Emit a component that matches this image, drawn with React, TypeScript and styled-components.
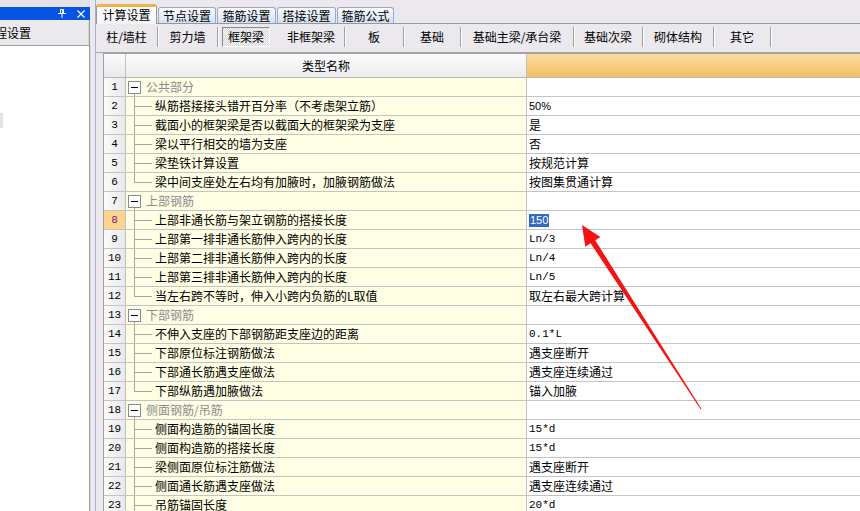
import React from 'react'
import styled, { createGlobalStyle, css } from 'styled-components'

type Line =
  | { kind: 'group'; label: string }
  | { kind: 'item'; label: string; value: string; font?: 'mono' | 'sans'; selected?: boolean }

const lines: Line[] = [
  { kind: 'group', label: '公共部分' },
  { kind: 'item', label: '纵筋搭接接头错开百分率（不考虑架立筋）', value: '50%', font: 'sans' },
  { kind: 'item', label: '截面小的框架梁是否以截面大的框架梁为支座', value: '是' },
  { kind: 'item', label: '梁以平行相交的墙为支座', value: '否' },
  { kind: 'item', label: '梁垫铁计算设置', value: '按规范计算' },
  { kind: 'item', label: '梁中间支座处左右均有加腋时，加腋钢筋做法', value: '按图集贯通计算' },
  { kind: 'group', label: '上部钢筋' },
  { kind: 'item', label: '上部非通长筋与架立钢筋的搭接长度', value: '150', font: 'sans', selected: true },
  { kind: 'item', label: '上部第一排非通长筋伸入跨内的长度', value: 'Ln/3', font: 'mono' },
  { kind: 'item', label: '上部第二排非通长筋伸入跨内的长度', value: 'Ln/4', font: 'mono' },
  { kind: 'item', label: '上部第三排非通长筋伸入跨内的长度', value: 'Ln/5', font: 'mono' },
  { kind: 'item', label: '当左右跨不等时，伸入小跨内负筋的L取值', value: '取左右最大跨计算' },
  { kind: 'group', label: '下部钢筋' },
  { kind: 'item', label: '不伸入支座的下部钢筋距支座边的距离', value: '0.1*L', font: 'mono' },
  { kind: 'item', label: '下部原位标注钢筋做法', value: '遇支座断开' },
  { kind: 'item', label: '下部通长筋遇支座做法', value: '遇支座连续通过' },
  { kind: 'item', label: '下部纵筋遇加腋做法', value: '锚入加腋' },
  { kind: 'group', label: '侧面钢筋/吊筋' },
  { kind: 'item', label: '侧面构造筋的锚固长度', value: '15*d', font: 'mono' },
  { kind: 'item', label: '侧面构造筋的搭接长度', value: '15*d', font: 'mono' },
  { kind: 'item', label: '梁侧面原位标注筋做法', value: '遇支座断开' },
  { kind: 'item', label: '侧面通长筋遇支座做法', value: '遇支座连续通过' },
  { kind: 'item', label: '吊筋锚固长度', value: '20*d', font: 'mono' },
]

const tabs = [
  { label: '计算设置', w: 61, active: true },
  { label: '节点设置', w: 58 },
  { label: '箍筋设置', w: 59 },
  { label: '搭接设置', w: 59 },
  { label: '箍筋公式', w: 57 },
]

const subTabs = [
  { label: '柱/墙柱', w: 62 },
  { label: '剪力墙', w: 60 },
  { label: '框架梁', w: 60, pressed: true },
  { label: '非框架梁', w: 67 },
  { label: '板', w: 59 },
  { label: '基础', w: 57 },
  { label: '基础主梁/承台梁', w: 113 },
  { label: '基础次梁', w: 69 },
  { label: '砌体结构', w: 71 },
  { label: '其它', w: 57 },
]

const CJK = '"Noto Sans CJK SC", "Liberation Sans", sans-serif'
const LINE = '#c4c4c4'
const TREE = '#a6a6a6'

const GlobalStyle = createGlobalStyle`
  html, body { margin: 0; padding: 0; }
  body {
    width: 860px;
    height: 511px;
    overflow: hidden;
    background: #ebe9ed;
    font-family: ${CJK};
    font-size: 12px;
    color: #000;
  }
  * { box-sizing: border-box; }
`

const Screen = styled.div`
  position: relative;
  display: flex;
  width: 860px;
  height: 511px;
  overflow: hidden;
`

const SidePanel = styled.div`
  width: 90px;
  flex: none;
  display: flex;
  flex-direction: column;
`

const TopStrip = styled.div`
  height: 7px;
  background: #e4e2e6;
`

const TitleBar = styled.div`
  height: 13px;
  background: #0554e3;
  display: flex;
  align-items: center;
  justify-content: flex-end;
  gap: 11px;
  padding-right: 5px;
`

const PanelHead = styled.div`
  height: 25px;
  display: flex;
  align-items: center;
  overflow: hidden;
  white-space: nowrap;
  border-right: 1px solid #9c9c9c;
  box-shadow: inset -1px 0 0 #d6d6d6;
  line-height: 14px;
`

const PanelTitle = styled.span`
  margin-left: -17px;
  padding-top: 1px;
`

const PanelBody = styled.div`
  flex: 1;
  background: #fff;
  border-top: 1px solid #a0a0a0;
  border-right: 1px solid #9c9c9c;
  box-shadow: 1px 0 0 #d6d6d6;
  padding-top: 67px;
`

const ListStub = styled.div`
  width: 3px;
  height: 15px;
  background: #e3e3e6;
`

const Splitter = styled.div`
  width: 6px;
  flex: none;
  border-right: 1px solid #a4b2cb;
`

const Main = styled.div`
  flex: 1;
  min-width: 0;
  display: flex;
  flex-direction: column;
`

const TabStrip = styled.div`
  height: 24px;
  flex: none;
  display: flex;
  align-items: flex-end;
  gap: 1px;
  padding-top: 4px;
  border-bottom: 1px solid #919b9c;
`

const Tab = styled.div<{ $active?: boolean; $w: number }>`
  width: ${p => p.$w}px;
  display: flex;
  align-items: center;
  justify-content: center;
  border: 1px solid #9aa9c4;
  border-bottom: none;
  border-radius: 3px 3px 0 0;
  line-height: 14px;
  ${p =>
    p.$active
      ? css`
          height: 20px;
          margin-bottom: -1px;
          background: linear-gradient(#fefefe, #f4f3f6);
          border-color: #919b9c;
          border-top: 3px solid #f3b046;
          padding-bottom: 1px;
        `
      : css`
          height: 16px;
          background: linear-gradient(#fbfcfe, #d4e0f4);
        `}
`

const SubTabBar = styled.div`
  height: 29px;
  flex: none;
  display: flex;
  align-items: flex-start;
  padding-top: 3px;
  border-bottom: 1px solid #a7a7ab;
`

const SubTab = styled.div<{ $w: number; $pressed?: boolean }>`
  width: ${p => p.$w}px;
  height: 20px;
  display: flex;
  align-items: center;
  line-height: 14px;
  ${p =>
    p.$pressed
      ? css`
          justify-content: flex-start;
          padding-left: 4px;
        `
      : css`
          justify-content: center;
          border-right: 1px solid #a0a0a0;
          box-shadow: 1px 0 0 #ffffff;
        `}
`

const PressedLabel = styled.span`
  width: 48px;
  height: 20px;
  display: flex;
  align-items: center;
  justify-content: center;
  border: 1px solid;
  border-color: #8a8a8a #ffffff #ffffff #8a8a8a;
  background: repeating-conic-gradient(#f4f4f4 0 25%, #d9d9dc 0 50%) 0 0 / 2px 2px;
`

const GridArea = styled.div`
  flex: 1;
  min-height: 0;
  padding-left: 7px;
  overflow: hidden;
`

const Grid = styled.div`
  border-left: 1px solid #a0a0a0;
  border-top: 1px solid #a0a0a0;
  background: #fff;
`

const HeaderRow = styled.div`
  display: flex;
  height: 24px;
  border-bottom: 1px solid #b8b8b8;
`

const HeadNum = styled.div`
  width: 22px;
  flex: none;
  border-right: 1px solid #c0c0c0;
  background: linear-gradient(#fbfbfb, #e9e9eb);
`

const HeadName = styled.div`
  width: 401px;
  flex: none;
  display: flex;
  align-items: center;
  justify-content: center;
  border-right: 1px solid #c0c0c0;
  background: linear-gradient(#fbfbfb, #ececee);
  line-height: 14px;
`

const HeadValue = styled.div`
  flex: 1;
  background: linear-gradient(#fadca3, #f2c064);
`

const Row = styled.div`
  display: flex;
  height: 19px;
  border-bottom: 1px solid ${LINE};
`

const NumCell = styled.div<{ $selected?: boolean }>`
  width: 22px;
  flex: none;
  display: flex;
  align-items: center;
  justify-content: center;
  border-right: 1px solid #c0c0c0;
  font-family: "Liberation Mono", monospace;
  font-size: 11px;
  ${p =>
    p.$selected
      ? css`
          background: #fdd48c;
          color: #7a1f7a;
        `
      : css`
          background: linear-gradient(90deg, #fbfbfb, #e9e9eb);
          color: #000;
        `}
`

const NameCell = styled.div`
  width: 401px;
  flex: none;
  display: flex;
  align-items: center;
  border-right: 1px solid #c0c0c0;
  background: #fefee4;
  line-height: 14px;
  white-space: nowrap;
  overflow: hidden;
`

const GroupGutter = styled.span`
  position: relative;
  align-self: stretch;
  width: 20px;
  flex: none;
  display: flex;
  align-items: center;
  padding-left: 2px;

  &::after {
    content: '';
    position: absolute;
    left: 8px;
    top: calc(50% + 7px);
    bottom: -1px;
    border-left: 1px solid ${TREE};
  }
`

const ToggleBox = styled.span`
  position: relative;
  width: 13px;
  height: 13px;
  border: 1px solid #8c8c8c;
  background: #fff;

  &::before {
    content: '';
    position: absolute;
    left: 2px;
    right: 2px;
    top: 5px;
    border-top: 1px solid #000;
  }
`

const GroupLabel = styled.span`
  color: #8c8c8c;
`

const Connector = styled.span<{ $last?: boolean }>`
  position: relative;
  align-self: stretch;
  width: 29px;
  flex: none;

  &::before {
    content: '';
    position: absolute;
    left: 8px;
    top: -1px;
    ${p => (p.$last ? 'height: calc(50% + 1px);' : 'bottom: -1px;')}
    border-left: 1px solid ${TREE};
  }

  &::after {
    content: '';
    position: absolute;
    left: 8px;
    width: 18px;
    top: 50%;
    border-top: 1px solid ${TREE};
  }
`

const ValueCell = styled.div<{ $font?: 'mono' | 'sans' }>`
  flex: 1;
  display: flex;
  align-items: center;
  padding-left: 2px;
  line-height: 14px;
  white-space: nowrap;
  ${p =>
    p.$font === 'mono' &&
    css`
      font-family: "Liberation Mono", ${CJK};
      font-size: 11px;
    `}
  ${p =>
    p.$font === 'sans' &&
    css`
      font-family: "Liberation Sans", ${CJK};
      font-size: 11px;
    `}
`

const Highlight = styled.span`
  background: #316ac5;
  color: #fff;
  line-height: 13px;
  padding: 0 1px;
`

const ArrowOverlay = styled.svg`
  position: absolute;
  left: 0;
  top: 0;
  pointer-events: none;
`

const PinIcon = () => (
  <svg width="8" height="9" viewBox="0 0 8 9">
    <path d="M2.5 0.5h3v4h-3z" fill="none" stroke="#fff" />
    <path d="M4.5 0.5v4" stroke="#fff" />
    <path d="M0 4.5h8M4 5v4" stroke="#fff" />
  </svg>
)

const CloseIcon = () => (
  <svg width="8" height="8" viewBox="0 0 8 8">
    <path d="M0.5 0.5l7 7M7.5 0.5l-7 7" stroke="#fff" strokeWidth="1.2" />
  </svg>
)

const App = () => {
  let num = 0
  return (
    <>
      <GlobalStyle />
      <Screen>
        <SidePanel>
          <TopStrip />
          <TitleBar>
            <PinIcon />
            <CloseIcon />
          </TitleBar>
          <PanelHead>
            <PanelTitle>工程设置</PanelTitle>
          </PanelHead>
          <PanelBody>
            <ListStub />
          </PanelBody>
        </SidePanel>
        <Splitter />
        <Main>
          <TabStrip>
            {tabs.map(t => (
              <Tab key={t.label} $w={t.w} $active={t.active}>
                {t.label}
              </Tab>
            ))}
          </TabStrip>
          <SubTabBar>
            {subTabs.map(t => (
              <SubTab key={t.label} $w={t.w} $pressed={t.pressed}>
                {t.pressed ? <PressedLabel>{t.label}</PressedLabel> : t.label}
              </SubTab>
            ))}
          </SubTabBar>
          <GridArea>
            <Grid>
              <HeaderRow>
                <HeadNum />
                <HeadName>类型名称</HeadName>
                <HeadValue />
              </HeaderRow>
              {lines.map((line, i) => {
                num += 1
                if (line.kind === 'group') {
                  return (
                    <Row key={i}>
                      <NumCell>{num}</NumCell>
                      <NameCell>
                        <GroupGutter>
                          <ToggleBox />
                        </GroupGutter>
                        <GroupLabel>{line.label}</GroupLabel>
                      </NameCell>
                      <ValueCell />
                    </Row>
                  )
                }
                const next = lines[i + 1]
                const last = next !== undefined && next.kind === 'group'
                return (
                  <Row key={i}>
                    <NumCell $selected={line.selected}>{num}</NumCell>
                    <NameCell>
                      <Connector $last={last} />
                      {line.label}
                    </NameCell>
                    <ValueCell $font={line.font}>
                      {line.selected ? <Highlight>{line.value}</Highlight> : line.value}
                    </ValueCell>
                  </Row>
                )
              })}
            </Grid>
          </GridArea>
        </Main>
        <ArrowOverlay width="860" height="511" viewBox="0 0 860 511">
          <polygon
            points="582,225 600.5,237 595.2,240.3 701.4,408.7 700.6,409.3 590.6,243.3 585.3,246.7"
            fill="#f31313"
          />
        </ArrowOverlay>
      </Screen>
    </>
  )
}

export default App
